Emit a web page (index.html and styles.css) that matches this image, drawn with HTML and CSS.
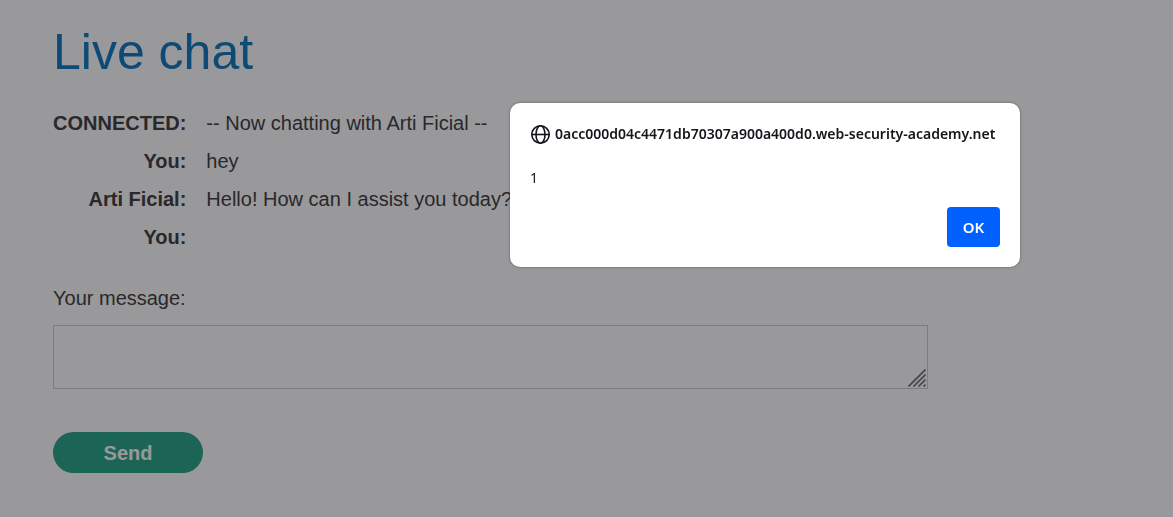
FILE: index.html
```html
<!DOCTYPE html>
<html lang="en">
<head>
<meta charset="utf-8">
<title>Live chat</title>
<link rel="stylesheet" href="styles.css">
</head>
<body>
<main class="page">
  <h1 class="title">Live chat</h1>
  <table class="chat">
    <tbody>
      <tr><th scope="row">CONNECTED:</th><td>-- Now chatting with Arti Ficial --</td></tr>
      <tr><th scope="row">You:</th><td>hey</td></tr>
      <tr><th scope="row">Arti Ficial:</th><td>Hello! How can I assist you today?</td></tr>
      <tr><th scope="row">You:</th><td></td></tr>
    </tbody>
  </table>
  <form class="compose">
    <label for="message">Your message:</label>
    <div class="field">
      <textarea id="message" name="message"></textarea>
      <svg class="grip" viewBox="0 0 18 18" aria-hidden="true"><path d="M.5 17.5 17.5.5M5.5 17.5l12-12M10.5 17.5l7-7M15.5 17.5l2-2"/></svg>
    </div>
    <button class="send" type="button">Send</button>
  </form>
</main>
<div class="overlay">
  <div class="dialog" role="alertdialog" aria-modal="true" aria-labelledby="origin" aria-describedby="alert-text">
    <div class="dialog-head">
      <svg class="globe" viewBox="0 0 20 20" aria-hidden="true"><circle cx="10.5" cy="10.5" r="8.7"/><ellipse cx="10.5" cy="10.5" rx="4.5" ry="8.7"/><path d="M1.8 10.5h17.4"/></svg>
      <span id="origin">0acc000d04c4471db70307a900a400d0.web-security-academy.net</span>
    </div>
    <p class="dialog-text" id="alert-text">1</p>
    <button class="ok" type="button">OK</button>
  </div>
</div>
</body>
</html>
```

FILE: styles.css
```css
* { box-sizing: border-box; }
body {
  margin: 0;
  background: #fff;
  color: #333332;
  font: 20px/24px Arial, "Liberation Sans", sans-serif;
}
.page { padding: 22px 245px 44px 53px; }
.title {
  margin: 0 0 29px;
  color: #0071ba;
  font-size: 50px;
  font-weight: 400;
  line-height: 60px;
}
.chat { border-collapse: collapse; }
.chat th, .chat td { padding: 0 0 14px; height: 38px; vertical-align: top; }
.chat th { text-align: right; font-weight: 700; }
.chat td { padding-left: 20px; }
.compose {
  display: flex;
  flex-direction: column;
  align-items: flex-start;
  margin-top: 23px;
}
.field { position: relative; width: 100%; margin: 15px 0 43px; }
.field textarea {
  display: block;
  width: 100%;
  height: 64px;
  padding: 8px;
  border: 1px solid #ccc;
  border-radius: 0;
  background: #fff;
  font: inherit;
  resize: none;
  outline: 0;
}
.grip {
  position: absolute;
  right: 2px;
  bottom: 2px;
  width: 18px;
  height: 18px;
  fill: none;
  stroke: #666;
  stroke-width: 1.6;
}
.send {
  width: 150px;
  height: 41px;
  padding: 0;
  border: 0;
  border-radius: 21px;
  background: #1ca080;
  color: #fff;
  font: bold 20px/24px Arial, "Liberation Sans", sans-serif;
}
.overlay {
  position: fixed;
  inset: 0;
  background: rgba(28, 27, 34, .45);
}
.dialog {
  position: absolute;
  top: 103px;
  left: 510px;
  display: flex;
  flex-direction: column;
  width: 510px;
  padding: 21px 20px 20px;
  border-radius: 10px;
  background: #fff;
  box-shadow: 0 0 3px rgba(0, 0, 0, .4);
  color: #15141a;
  font: 14px/20px "Segoe UI", "Noto Sans", sans-serif;
}
.dialog-head {
  display: flex;
  align-items: center;
  gap: 5px;
  font-weight: 600;
  white-space: nowrap;
}
.globe {
  flex: none;
  width: 20px;
  height: 20px;
  fill: none;
  stroke: #15141a;
  stroke-width: 1.6;
}
.dialog-text { margin: 24px 0 19px; }
.ok {
  align-self: flex-end;
  width: 53px;
  height: 40px;
  padding: 0;
  border: 0;
  border-radius: 4px;
  background: #0061ff;
  color: #fff;
  font: 600 15px/20px "Segoe UI", "Noto Sans", sans-serif;
}
```
